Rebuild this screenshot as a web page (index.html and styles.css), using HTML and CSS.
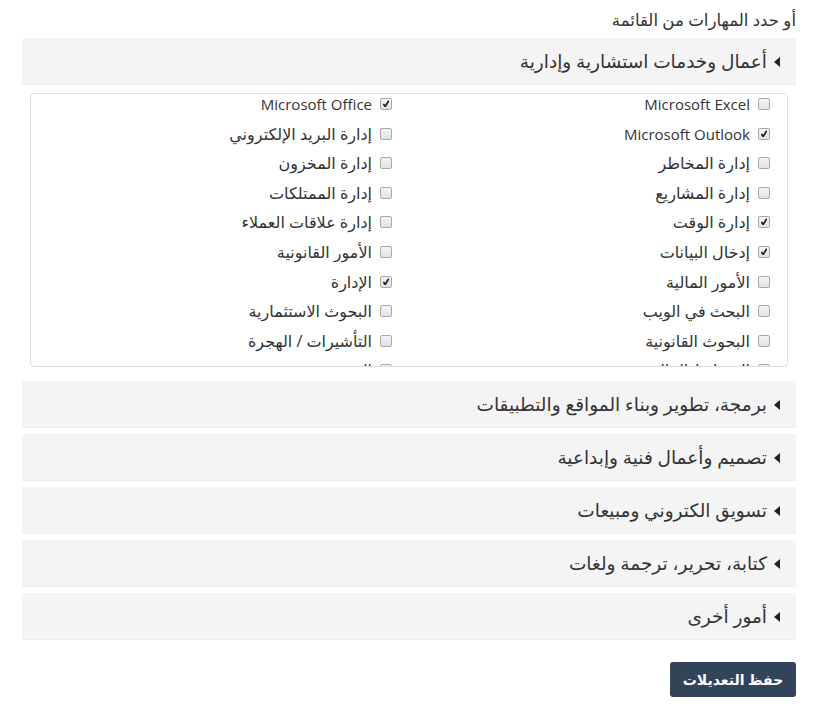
FILE: index.html
```html
<!DOCTYPE html>
<html lang="ar" dir="rtl">
<head>
<meta charset="utf-8">
<title>المهارات</title>
<link rel="stylesheet" href="styles.css">
</head>
<body>
<div class="page">
  <div class="title">أو حدد المهارات من القائمة</div>

  <div class="panel">
    <div class="panel-head"><span class="caret"></span>أعمال وخدمات استشارية وإدارية</div>
    <div class="panel-body">
      <div class="skills">
        <label class="item"><span class="cb"></span><span class="en">Microsoft Excel</span></label>
        <label class="item"><span class="cb on"></span><span class="en">Microsoft Office</span></label>
        <label class="item"><span class="cb on"></span><span class="en">Microsoft Outlook</span></label>
        <label class="item"><span class="cb"></span><span>إدارة البريد الإلكتروني</span></label>
        <label class="item"><span class="cb"></span><span>إدارة المخاطر</span></label>
        <label class="item"><span class="cb"></span><span>إدارة المخزون</span></label>
        <label class="item"><span class="cb"></span><span>إدارة المشاريع</span></label>
        <label class="item"><span class="cb"></span><span>إدارة الممتلكات</span></label>
        <label class="item"><span class="cb on"></span><span>إدارة الوقت</span></label>
        <label class="item"><span class="cb"></span><span>إدارة علاقات العملاء</span></label>
        <label class="item"><span class="cb on"></span><span>إدخال البيانات</span></label>
        <label class="item"><span class="cb"></span><span>الأمور القانونية</span></label>
        <label class="item"><span class="cb"></span><span>الأمور المالية</span></label>
        <label class="item"><span class="cb on"></span><span>الإدارة</span></label>
        <label class="item"><span class="cb"></span><span>البحث في الويب</span></label>
        <label class="item"><span class="cb"></span><span>البحوث الاستثمارية</span></label>
        <label class="item"><span class="cb"></span><span>البحوث القانونية</span></label>
        <label class="item"><span class="cb"></span><span>التأشيرات / الهجرة</span></label>
        <label class="item"><span class="cb"></span><span>التخطيط المالي</span></label>
        <label class="item"><span class="cb"></span><span>التقنية</span></label>
      </div>
    </div>
  </div>

  <div class="panel"><div class="panel-head"><span class="caret"></span>برمجة، تطوير وبناء المواقع والتطبيقات</div></div>
  <div class="panel"><div class="panel-head"><span class="caret"></span>تصميم وأعمال فنية وإبداعية</div></div>
  <div class="panel"><div class="panel-head"><span class="caret"></span>تسويق الكتروني ومبيعات</div></div>
  <div class="panel"><div class="panel-head"><span class="caret"></span>كتابة، تحرير، ترجمة ولغات</div></div>
  <div class="panel"><div class="panel-head"><span class="caret"></span>أمور أخرى</div></div>

  <div class="actions">
    <button class="btn">حفظ التعديلات</button>
  </div>
</div>
</body>
</html>
```
FILE: styles.css
```css
html, body {
  margin: 0;
  padding: 0;
  background: #fff;
}
body {
  font-family: "Open Sans", "DejaVu Sans", sans-serif;
  color: #333;
  direction: rtl;
}
.page {
  padding: 9px 18px 0 22px;
}
.title {
  font-size: 16.6px;
  line-height: 22px;
  height: 29px;
  color: #333;
}
.panel {
  margin-bottom: 6px;
}
.panel-head {
  background: #f4f4f4;
  border-bottom: 1px solid #ececec;
  height: 46px;
  line-height: 46px;
  font-size: 18.5px;
  color: #333;
  padding-right: 16px;
  border-radius: 3px 3px 0 0;
  display: flex;
  align-items: center;
}
.caret {
  width: 0;
  height: 0;
  border-top: 5px solid transparent;
  border-bottom: 5px solid transparent;
  border-right: 6px solid #222;
  margin-left: 7px;
  margin-top: 1px;
}
.panel-body {
  padding: 8px;
}
.skills {
  border: 1px solid #ddd;
  border-radius: 4px;
  height: 272px;
  overflow: hidden;
  display: grid;
  grid-template-columns: 1fr 1fr;
  align-content: start;
}
.item {
  display: flex;
  align-items: center;
  height: 20px;
  margin-bottom: 9.6px;
  padding-right: 17px;
  font-size: 16px;
  color: #333;
  white-space: nowrap;
}
.en {
  font-size: 15px;
}
.cb {
  width: 10px;
  height: 10px;
  border: 1px solid #a9a9a9;
  border-radius: 2px;
  background: linear-gradient(#f4f4f4, #e2e2e2);
  margin-left: 8px;
  position: relative;
  flex: none;
}
.cb.on::after {
  content: "";
  position: absolute;
  left: 2px;
  top: 1px;
  width: 6px;
  height: 7px;
  background: no-repeat center/contain url("data:image/svg+xml;utf8,<svg xmlns='http://www.w3.org/2000/svg' viewBox='0 0 6 7'><path d='M0.3 4 L2.2 6.4 L5.8 0.6' fill='none' stroke='%23222' stroke-width='1.8'/></svg>");
}
.actions {
  padding-top: 16px;
  display: flex;
}
.btn {
  font-family: "Open Sans", "DejaVu Sans", sans-serif;
  font-size: 14px;
  font-weight: bold;
  color: #fff;
  background: #33435a;
  border: none;
  border-radius: 3px;
  width: 126px;
  height: 35px;
  padding: 0;
}
```
